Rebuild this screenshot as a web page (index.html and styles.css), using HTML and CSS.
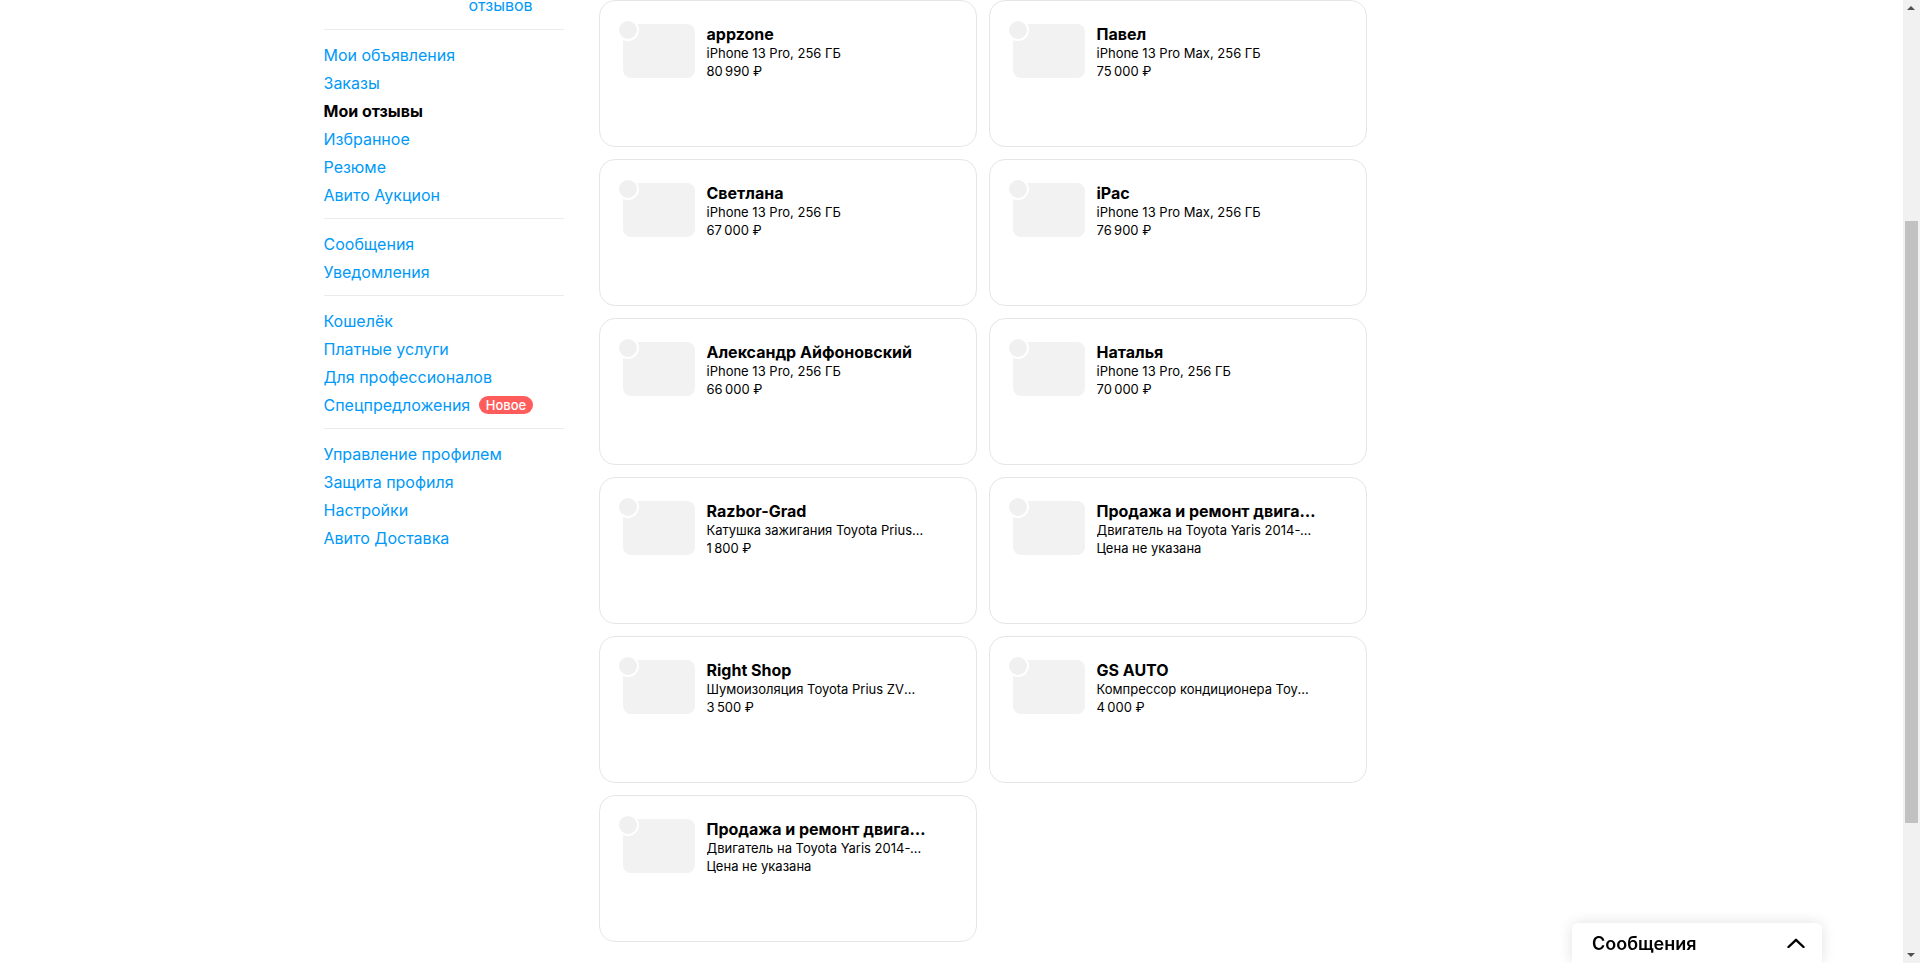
FILE: index.html
```html
<!DOCTYPE html>
<html lang="ru">
<head>
  <meta charset="UTF-8">
  <title>Мои отзывы</title>
  <link rel="stylesheet" href="styles.css">
</head>
<body>

  <header class="topbar">
    <div class="topbar-inner">
      <span class="logo">Авито</span>
      <nav class="topbar-links">
        <a href="#">Для бизнеса</a>
        <a href="#">Помощь</a>
        <a href="#">Каталоги</a>
      </nav>
    </div>
  </header>

  <div class="page">
    <aside class="sidebar">
      <div class="profile">
        <div class="profile-avatar"></div>
        <div class="profile-name">Алексей</div>
        <div class="profile-note">На Авито с марта 2019</div>
        <div class="profile-note profile-note-last">Подтверждён телефон</div>
        <div class="rating">
          <div class="stars">
            <svg viewBox="0 0 16 16"><polygon points="8,1 10,6 15,6 11,9.5 12.5,15 8,11.8 3.5,15 5,9.5 1,6 6,6"/></svg>
            <svg viewBox="0 0 16 16"><polygon points="8,1 10,6 15,6 11,9.5 12.5,15 8,11.8 3.5,15 5,9.5 1,6 6,6"/></svg>
            <svg viewBox="0 0 16 16"><polygon points="8,1 10,6 15,6 11,9.5 12.5,15 8,11.8 3.5,15 5,9.5 1,6 6,6"/></svg>
            <svg viewBox="0 0 16 16"><polygon points="8,1 10,6 15,6 11,9.5 12.5,15 8,11.8 3.5,15 5,9.5 1,6 6,6"/></svg>
            <svg viewBox="0 0 16 16"><polygon points="8,1 10,6 15,6 11,9.5 12.5,15 8,11.8 3.5,15 5,9.5 1,6 6,6"/></svg>
          </div>
          <a class="rating-link" href="#">38 отзывов</a>
        </div>
      </div>

      <nav class="nav-group">
        <a href="#">Мои объявления</a>
        <a href="#">Заказы</a>
        <a href="#" class="active">Мои отзывы</a>
        <a href="#">Избранное</a>
        <a href="#">Резюме</a>
        <a href="#">Авито Аукцион</a>
      </nav>
      <nav class="nav-group">
        <a href="#">Сообщения</a>
        <a href="#">Уведомления</a>
      </nav>
      <nav class="nav-group">
        <a href="#">Кошелёк</a>
        <a href="#">Платные услуги</a>
        <a href="#">Для профессионалов</a>
        <a href="#">Спецпредложения <span class="badge">Новое</span></a>
      </nav>
      <nav class="nav-group">
        <a href="#">Управление профилем</a>
        <a href="#">Защита профиля</a>
        <a href="#">Настройки</a>
        <a href="#">Авито Доставка</a>
      </nav>
    </aside>

    <main class="content">
      <div class="page-head">
        <h1>Мои отзывы</h1>
        <div class="tabs">
          <a href="#" class="tab tab-active">Ожидают отзыва <span>11</span></a>
          <a href="#" class="tab">Оставленные</a>
        </div>
      </div>

      <div class="reviews">
        <div class="card">
          <div class="thumb"></div>
          <div class="info">
            <div class="seller">appzone</div>
            <div class="line">iPhone 13 Pro, 256 ГБ</div>
            <div class="line">80&#8239;990 ₽</div>
          </div>
        </div>
        <div class="card">
          <div class="thumb"></div>
          <div class="info">
            <div class="seller">Павел</div>
            <div class="line">iPhone 13 Pro Max, 256 ГБ</div>
            <div class="line">75&#8239;000 ₽</div>
          </div>
        </div>
        <div class="card">
          <div class="thumb"></div>
          <div class="info">
            <div class="seller">Светлана</div>
            <div class="line">iPhone 13 Pro, 256 ГБ</div>
            <div class="line">67&#8239;000 ₽</div>
          </div>
        </div>
        <div class="card">
          <div class="thumb"></div>
          <div class="info">
            <div class="seller">iPac</div>
            <div class="line">iPhone 13 Pro Max, 256 ГБ</div>
            <div class="line">76&#8239;900 ₽</div>
          </div>
        </div>
        <div class="card">
          <div class="thumb"></div>
          <div class="info">
            <div class="seller">Александр Айфоновский</div>
            <div class="line">iPhone 13 Pro, 256 ГБ</div>
            <div class="line">66&#8239;000 ₽</div>
          </div>
        </div>
        <div class="card">
          <div class="thumb"></div>
          <div class="info">
            <div class="seller">Наталья</div>
            <div class="line">iPhone 13 Pro, 256 ГБ</div>
            <div class="line">70&#8239;000 ₽</div>
          </div>
        </div>
        <div class="card">
          <div class="thumb"></div>
          <div class="info">
            <div class="seller">Razbor-Grad</div>
            <div class="line">Катушка зажигания Toyota Prius 30</div>
            <div class="line">1&#8239;800 ₽</div>
          </div>
        </div>
        <div class="card">
          <div class="thumb"></div>
          <div class="info">
            <div class="seller">Продажа и ремонт двигателей</div>
            <div class="line">Двигатель на Toyota Yaris 2014-2019</div>
            <div class="line">Цена не указана</div>
          </div>
        </div>
        <div class="card">
          <div class="thumb"></div>
          <div class="info">
            <div class="seller">Right Shop</div>
            <div class="line">Шумоизоляция Toyota Prius ZVW30</div>
            <div class="line">3&#8239;500 ₽</div>
          </div>
        </div>
        <div class="card">
          <div class="thumb"></div>
          <div class="info">
            <div class="seller">GS AUTO</div>
            <div class="line">Компрессор кондиционера Toyota Prius</div>
            <div class="line">4&#8239;000 ₽</div>
          </div>
        </div>
        <div class="card">
          <div class="thumb"></div>
          <div class="info">
            <div class="seller">Продажа и ремонт двигателей</div>
            <div class="line">Двигатель на Toyota Yaris 2014-2019</div>
            <div class="line">Цена не указана</div>
          </div>
        </div>
      </div>
    </main>
  </div>

  <div class="chat-bar">
    <span>Сообщения</span>
    <svg class="chat-toggle" viewBox="0 0 18 10" width="18" height="10">
      <polyline points="1.5,9 9,1.8 16.5,9" fill="none" stroke="#000" stroke-width="2.4" stroke-linecap="round" stroke-linejoin="round"/>
    </svg>
  </div>

  <div class="scrollbar">
    <div class="scrollbar-btn scrollbar-up"></div>
    <div class="scrollbar-thumb"></div>
    <div class="scrollbar-btn scrollbar-down"></div>
  </div>

  <script src="script.js"></script>
</body>
</html>
```

FILE: styles.css
```css
html, body {
  margin: 0;
  padding: 0;
  background: #fff;
  color: #000;
  font-family: Inter, "Noto Sans", sans-serif;
}
body {
  margin-right: 17px;
}
a {
  text-decoration: none;
  color: #0099f7;
}

/* top bar */
.topbar {
  height: 64px;
  border-bottom: 1px solid #ececec;
  box-sizing: border-box;
}
.topbar-inner {
  width: 1256px;
  margin: 0 auto;
  height: 100%;
  display: flex;
  align-items: center;
  gap: 32px;
}
.logo {
  font-size: 24px;
  font-weight: 800;
}
.topbar-links {
  display: flex;
  gap: 20px;
  font-size: 14px;
}

/* page layout */
.page {
  width: 1256px;
  margin: 0 auto;
  padding: 32px 0 218px;
  display: flex;
  align-items: flex-start;
}
.sidebar {
  width: 240px;
  flex-shrink: 0;
  margin-right: 35px;
}
.content {
  flex: 1;
}

/* profile block */
.profile {
  padding-bottom: 14px;
}
.profile-avatar {
  width: 96px;
  height: 96px;
  border-radius: 50%;
  background: #f2f2f2;
  margin-bottom: 16px;
}
.profile-name {
  font-size: 22px;
  line-height: 28px;
  font-weight: 700;
}
.profile-note {
  font-size: 14px;
  line-height: 20px;
  color: #757575;
}
.profile-note-last {
  margin-bottom: 25px;
}
.rating {
  display: grid;
  grid-template-columns: 145px 1fr;
  font-size: 16px;
  line-height: 20px;
}
.stars {
  display: flex;
  gap: 2px;
  margin-top: 2px;
}
.stars svg {
  width: 16px;
  height: 16px;
  fill: #ffb021;
}
.rating-link {
  width: 70px;
}

/* navigation */
.nav-group {
  border-top: 1px solid #ebebeb;
  padding: 11px 0 9px;
}
.nav-group a {
  display: block;
  font-size: 16px;
  line-height: 28px;
}
.nav-group a.active {
  color: #000;
  font-weight: 700;
}
.badge {
  display: inline-block;
  vertical-align: 1px;
  margin-left: 4px;
  padding: 0 7px;
  height: 18px;
  line-height: 18px;
  border-radius: 9px;
  background: #ff5c5c;
  color: #fff;
  font-size: 13px;
  font-weight: 500;
}

/* heading and tabs */
.page-head {
  height: 230px;
}
.page-head h1 {
  margin: 0 0 24px;
  font-size: 32px;
  line-height: 40px;
  font-weight: 800;
}
.tabs {
  display: flex;
  gap: 24px;
  font-size: 16px;
  line-height: 40px;
}
.tab {
  color: #000;
}
.tab span {
  color: #757575;
}
.tab-active {
  font-weight: 700;
}

/* review cards */
.reviews {
  display: grid;
  grid-template-columns: 378px 378px;
  gap: 12px;
}
.card {
  box-sizing: border-box;
  height: 147px;
  border: 1px solid #e6e6e6;
  border-radius: 16px;
  padding: 23px;
  display: flex;
  align-items: flex-start;
  gap: 12px;
}
.thumb {
  position: relative;
  width: 72px;
  height: 54px;
  flex-shrink: 0;
  border-radius: 8px;
  background: #f2f2f2;
}
.thumb::before {
  content: "";
  position: absolute;
  left: -6px;
  top: -5px;
  width: 18px;
  height: 18px;
  border: 2px solid #fff;
  border-radius: 50%;
  background: #f0f0f0;
}
.info {
  width: 220px;
  min-width: 0;
}
.seller {
  font-size: 16px;
  line-height: 20px;
  font-weight: 700;
  white-space: nowrap;
  overflow: hidden;
  text-overflow: ellipsis;
}
.line {
  font-size: 13px;
  line-height: 18px;
  white-space: nowrap;
  overflow: hidden;
  text-overflow: ellipsis;
}

/* messenger bar */
.chat-bar {
  position: fixed;
  right: 98px;
  bottom: 0;
  width: 250px;
  height: 40px;
  box-sizing: border-box;
  padding: 0 17px 0 20px;
  display: flex;
  align-items: center;
  justify-content: space-between;
  background: #fff;
  border-radius: 6px 6px 0 0;
  box-shadow: 0 0 14px rgba(0, 0, 0, 0.12);
  font-size: 18px;
  font-weight: 600;
}

/* page scrollbar */
.scrollbar {
  position: fixed;
  top: 0;
  right: 0;
  bottom: 0;
  width: 17px;
  background: #f1f1f1;
}
.scrollbar-btn {
  position: absolute;
  left: 0;
  width: 17px;
  height: 17px;
}
.scrollbar-up {
  top: 0;
}
.scrollbar-down {
  bottom: 0;
}
.scrollbar-btn::before {
  content: "";
  position: absolute;
  left: 4px;
  border-left: 4px solid transparent;
  border-right: 4px solid transparent;
}
.scrollbar-up::before {
  top: 6px;
  border-bottom: 4px solid #505050;
}
.scrollbar-down::before {
  top: 7px;
  border-top: 4px solid #505050;
}
.scrollbar-thumb {
  position: absolute;
  left: 2px;
  width: 13px;
  background: #c1c1c1;
}
```

FILE: script.js
```js
document.querySelector('.reviews').scrollIntoView({ block: 'start' });

// thumb size and offset follow the document scroll
const thumb = document.querySelector('.scrollbar-thumb');

function placeThumb() {
  const track = window.innerHeight - 34;
  const docH = document.documentElement.scrollHeight;
  thumb.style.height = (track * window.innerHeight / docH) + 'px';
  thumb.style.top = (17 + track * window.scrollY / docH) + 'px';
}

placeThumb();
window.addEventListener('scroll', placeThumb);
```
